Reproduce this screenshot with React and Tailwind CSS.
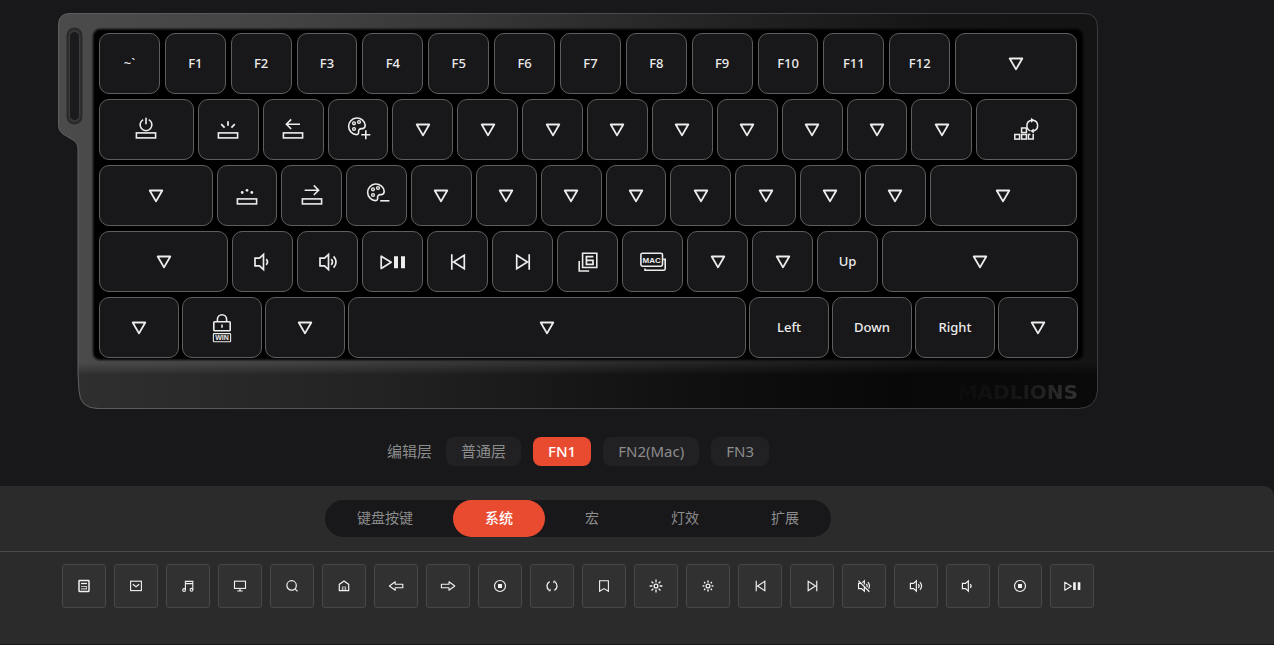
import { useState } from "react";

const UI_FONT = "font-['Noto_Sans','Noto_Sans_CJK_SC',sans-serif]";

function Icon({ w, h, className = "", children }) {
  return (
    <svg
      width={w}
      height={h}
      viewBox={`0 0 ${w} ${h}`}
      fill="none"
      stroke="currentColor"
      strokeWidth="1.6"
      aria-hidden="true"
      className={`shrink-0 ${className}`}
    >
      {children}
    </svg>
  );
}

/* ---------- key cap icons ---------- */

const Transparent = () => (
  <Icon w={16} h={14}>
    <path d="M1.7 1.5h12.6L8 12.4z" strokeWidth="1.8" strokeLinejoin="round" />
  </Icon>
);

const Bar = () => <rect x="1.4" y="15.9" width="19.2" height="5" strokeWidth="1.6" />;

const LightPower = () => (
  <Icon w={22} h={26}>
    <Bar />
    <path d="M8.2 2.6a5.9 5.9 0 1 0 5.6 0M11 .8v6.4" />
  </Icon>
);

const LightUp = () => (
  <Icon w={22} h={26}>
    <Bar />
    <path d="M11 4.3v4.4M4.2 7.2l3.4 3.4M17.8 7.2l-3.4 3.4" strokeWidth="1.8" />
  </Icon>
);

const LightDown = () => (
  <Icon w={22} h={26}>
    <Bar />
    <g fill="currentColor" stroke="none">
      <circle cx="11" cy="7.3" r="1.4" />
      <circle cx="6.2" cy="9.5" r="1.4" />
      <circle cx="15.8" cy="9.5" r="1.4" />
    </g>
  </Icon>
);

const SpeedDown = () => (
  <Icon w={22} h={26}>
    <Bar />
    <path d="M18 7.2H4.6M9.2 2.4L4.4 7.2l4.8 4.8" />
  </Icon>
);

const SpeedUp = () => (
  <Icon w={22} h={26}>
    <Bar />
    <path d="M3.6 7.2H17M12.8 2.4l4.8 4.8-4.8 4.8" />
  </Icon>
);

const PaletteShape = () => (
  <>
    <path d="M12.7 17.6A8.3 8.3 0 1 1 21.2 8.4Q21 11.4 18.6 11.6H17.6Q14.4 11.8 14.6 14.6Q14.8 17.6 12.7 17.6Z" />
    <circle cx="10" cy="6.3" r="1.4" strokeWidth="1.4" />
    <circle cx="15" cy="5" r="1.4" strokeWidth="1.4" />
    <circle cx="10" cy="12" r="1.4" strokeWidth="1.4" />
  </>
);

const PalettePlus = () => (
  <Icon w={27} h={26}>
    <PaletteShape />
    <path d="M17.3 17.8h9M21.8 13.3v9" />
  </Icon>
);

const PaletteMinus = () => (
  <Icon w={27} h={26}>
    <PaletteShape />
    <path d="M17.2 17.8h9.2" />
  </Icon>
);

const EffectSwitch = () => (
  <Icon w={26} h={26}>
    <g strokeWidth="1.5">
      <rect x=".8" y="17.5" width="4.8" height="4.6" />
      <rect x="7.6" y="17.5" width="4.8" height="4.6" />
      <rect x="7.6" y="11" width="4.8" height="4.6" />
      <path d="M16.4 17.5h-2v4.6h4.8v-5" />
      <path d="M16.4 13.9A5.6 5.6 0 0 1 17.4 3.2M19.4 3.2a5.6 5.6 0 0 1 .2 10.8" />
    </g>
    <path d="M17 .8v5l3.4-2.5zM19.8 11.4v5l-3.4-2.5z" fill="currentColor" stroke="none" />
  </Icon>
);

const Speaker = () => <path d="M2 6.2h4.5l4-3.7v15l-4-3.7H2z" />;

const VolumeDown = ({ className }) => (
  <svg viewBox="0 0 20 20" fill="none" stroke="currentColor" strokeWidth="1.7" aria-hidden="true" className={className}>
    <Speaker />
    <path d="M13.2 7.2q2.6 2.8 0 5.6" />
  </svg>
);

const VolumeUp = ({ className }) => (
  <svg viewBox="0 0 20 20" fill="none" stroke="currentColor" strokeWidth="1.7" aria-hidden="true" className={className}>
    <Speaker />
    <path d="M13.2 7.2q2.6 2.8 0 5.6M15.6 4.4q4.8 5.6 0 11.2" />
  </svg>
);

const VolumeMute = ({ className }) => (
  <svg viewBox="0 0 20 20" fill="none" stroke="currentColor" strokeWidth="1.7" aria-hidden="true" className={className}>
    <path d="M5.4 6.2H2.2v7.6h4.3l4 3.7V11M7.6 5.2l2.9-2.7v5.2M13.2 7.2q2 2 .9 4.2M15.6 4.4q3.8 4.6 1 9.4M2 2.4l15.6 15.8" />
  </svg>
);

const PlayPause = ({ className }) => (
  <svg viewBox="0 0 26 20" fill="none" stroke="currentColor" strokeWidth="1.7" aria-hidden="true" className={className}>
    <path d="M1.2 4.2v12.2l10-6.1z" strokeLinejoin="round" />
    <path d="M14 4.2h4v12h-4zM21 4.2h4v12h-4z" fill="currentColor" stroke="none" />
  </svg>
);

const Previous = ({ className }) => (
  <svg viewBox="0 0 16 20" fill="none" stroke="currentColor" strokeWidth="1.7" aria-hidden="true" className={className}>
    <path d="M1.8 2.2v15.6M14.3 3.2v13.6L3.6 10z" />
  </svg>
);

const Next = ({ className }) => (
  <svg viewBox="0 0 16 20" fill="none" stroke="currentColor" strokeWidth="1.7" aria-hidden="true" className={className}>
    <path d="M14.2 2.2v15.6M1.7 3.2v13.6L12.4 10z" />
  </svg>
);

const SixKey = () => (
  <Icon w={20} h={20}>
    <path d="M4.6 1.2h14.2v14.3H4.6zM1.2 9v10h10" />
    <path d="M15.4 4.6H8.4v7.8h6.6V8.4H8.4" strokeWidth="1.7" />
  </Icon>
);

const MacKey = () => (
  <Icon w={26} h={20}>
    <rect x=".9" y="1.2" width="21.6" height="13" rx="1.6" />
    <path d="M5 16.4v1.9h18.6q1.6 0 1.6-1.6V7.4h-2" />
    <text
      x="11.7"
      y="10.6"
      textAnchor="middle"
      fontFamily="Liberation Sans, sans-serif"
      fontWeight="700"
      fontSize="8"
      fill="currentColor"
      stroke="none"
    >
      MAC
    </text>
  </Icon>
);

const WinLock = () => (
  <Icon w={22} h={30}>
    <path d="M6.4 8.6V6.4a4.6 4.6 0 0 1 9.2 0v2.2" />
    <rect x="2.8" y="8.7" width="16.4" height="9" rx=".8" />
    <path d="M11 11.4v3.4" strokeWidth="1.5" />
    <rect x="2.4" y="20.6" width="17.2" height="8.2" rx=".6" strokeWidth="1.1" />
    <text
      x="11"
      y="27.3"
      textAnchor="middle"
      fontFamily="Liberation Sans, sans-serif"
      fontWeight="700"
      fontSize="7"
      fill="currentColor"
      stroke="none"
    >
      WIN
    </text>
  </Icon>
);

/* ---------- palette tile icons (16px grid) ---------- */

function Small({ children }) {
  return (
    <svg viewBox="0 0 16 16" fill="none" stroke="currentColor" strokeWidth="1.1" aria-hidden="true" className="size-4">
      {children}
    </svg>
  );
}

const Calculator = () => (
  <Small>
    <rect x="3" y="2.6" width="10" height="10.8" rx=".6" strokeWidth="1.5" />
    <path d="M5 5.5h6" strokeWidth="1.3" />
    <path d="M5 8.5h6M5 10.9h6M10.5 8.5v2.5" strokeOpacity=".75" />
  </Small>
);
const Mail = () => (
  <Small>
    <rect x="2.6" y="3.2" width="10.8" height="9.4" />
    <path d="M4.8 6.2L8 8.8l3.2-2.6" />
  </Small>
);
const Music = () => (
  <Small>
    <path d="M5.4 11.8V3.4h7.4v8M5.4 5.6h7.4" />
    <circle cx="4.1" cy="12" r="1.4" />
    <circle cx="11.5" cy="11.8" r="1.4" />
  </Small>
);
const Monitor = () => (
  <Small>
    <rect x="2.5" y="3.2" width="11" height="7.2" />
    <path d="M8 10.5v2.3M5.3 13h5.4" strokeWidth="1.2" />
  </Small>
);
const Search = () => (
  <Small>
    <circle cx="7.6" cy="7.4" r="4.7" strokeWidth="1.2" />
    <path d="M11 10.8l2.5 2.6" strokeWidth="1.2" />
  </Small>
);
const HomeIcon = () => (
  <Small>
    <path d="M3.3 12.7V6.4L8 3l4.7 3.4v6.3z" strokeWidth="1.2" />
    <path d="M6.4 12.5V9h3.2v3.5M8 10.4v2" strokeOpacity=".7" />
  </Small>
);
const Back = () => (
  <Small>
    <path d="M1.4 8l5.8-4.2v2.4h7.6v3.6H7.2v2.4z" strokeLinejoin="round" />
  </Small>
);
const Forward = () => (
  <Small>
    <path d="M14.8 8L9 3.8v2.4H1.4v3.6H9v2.4z" strokeLinejoin="round" />
  </Small>
);
const Stop = () => (
  <Small>
    <circle cx="8" cy="8" r="5.5" strokeWidth="1.2" />
    <path d="M6 6h4v4H6z" fill="currentColor" stroke="none" />
  </Small>
);
const Refresh = () => (
  <Small>
    <path d="M5.6 3.6A5 5 0 0 0 5.2 12.2M10.4 12.4A5 5 0 0 0 10.8 3.8" strokeWidth="1.3" />
    <path d="M6.6 10.6v2.6H4.4zM9.4 5.4V2.8h2.2z" fill="currentColor" stroke="none" />
  </Small>
);
const Bookmark = () => (
  <Small>
    <path d="M3.6 2.8h8.8v10.4L8 10.6l-4.4 2.6z" />
  </Small>
);
const BrightnessUp = () => (
  <Small>
    <circle cx="8" cy="8" r="1.9" strokeWidth="1.3" />
    <path
      d="M8 1.6v2.8M8 11.6v2.8M1.6 8h2.8M11.6 8h2.8M3.5 3.5l1.9 1.9M10.6 10.6l1.9 1.9M12.5 3.5l-1.9 1.9M5.4 10.6l-1.9 1.9"
      strokeWidth="1.3"
    />
  </Small>
);
const BrightnessDown = () => (
  <Small>
    <circle cx="8" cy="8" r="1.9" strokeWidth="1.3" />
    <path
      d="M8 2.6v1.8M8 11.6v1.8M2.6 8h1.8M11.6 8h1.8M4.1 4.1l1.2 1.2M10.7 10.7l1.2 1.2M11.9 4.1l-1.2 1.2M5.3 10.7l-1.2 1.2"
      strokeWidth="1.5"
    />
  </Small>
);

/* ---------- keyboard data ---------- */

const none = (width = "grow-59") => ({ label: "透传", icon: <Transparent />, width });
const text = (t, width = "grow-59") => ({ label: t, text: t, width });
const glyph = (label, icon, width = "grow-59") => ({ label, icon, width });

const ROWS = [
  {
    spacing: "gap-[5px] pr-px",
    keys: [
      text("~`"),
      text("F1"),
      text("F2"),
      text("F3"),
      text("F4"),
      text("F5"),
      text("F6"),
      text("F7"),
      text("F8"),
      text("F9"),
      text("F10"),
      text("F11"),
      text("F12"),
      none("grow-120"),
    ],
  },
  {
    spacing: "gap-1 pr-px",
    keys: [
      glyph("灯光开关", <LightPower />, "grow-93"),
      glyph("亮度加", <LightUp />),
      glyph("速度减", <SpeedDown />),
      glyph("颜色加", <PalettePlus />),
      none(),
      none(),
      none(),
      none(),
      none(),
      none(),
      none(),
      none(),
      none(),
      glyph("切换灯效", <EffectSwitch />, "grow-99"),
    ],
  },
  {
    spacing: "gap-1 pr-px",
    keys: [
      none("grow-112"),
      glyph("亮度减", <LightDown />),
      glyph("速度加", <SpeedUp />),
      glyph("颜色减", <PaletteMinus />),
      none(),
      none(),
      none(),
      none(),
      none(),
      none(),
      none(),
      none(),
      none("grow-146"),
    ],
  },
  {
    spacing: "gap-1",
    keys: [
      none("grow-127"),
      glyph("音量减", <VolumeDown className="size-5" />),
      glyph("音量加", <VolumeUp className="size-5" />),
      glyph("播放/暂停", <PlayPause className="h-5 w-[26px]" />),
      glyph("上一曲", <Previous className="h-5 w-4" />),
      glyph("下一曲", <Next className="h-5 w-4" />),
      glyph("六键无冲", <SixKey />),
      glyph("Mac 模式", <MacKey />),
      none(),
      none(),
      text("Up"),
      none("grow-194"),
    ],
  },
  {
    spacing: "gap-[3px]",
    keys: [
      none("grow-78"),
      glyph("锁定 Win", <WinLock />, "grow-78"),
      none("grow-78"),
      none("grow-396"),
      text("Left", "grow-78"),
      text("Down", "grow-78"),
      text("Right", "grow-78"),
      none("grow-78"),
    ],
  },
];

const LAYERS = ["普通层", "FN1", "FN2(Mac)", "FN3"];
const TABS = ["键盘按键", "系统", "宏", "灯效", "扩展"];

const TILES = [
  ["计算器", <Calculator />],
  ["邮件", <Mail />],
  ["音乐", <Music />],
  ["我的电脑", <Monitor />],
  ["搜索", <Search />],
  ["主页", <HomeIcon />],
  ["后退", <Back />],
  ["前进", <Forward />],
  ["停止", <Stop />],
  ["刷新", <Refresh />],
  ["收藏", <Bookmark />],
  ["亮度加", <BrightnessUp />],
  ["亮度减", <BrightnessDown />],
  ["上一曲", <Previous className="h-[14px] w-[11px]" />],
  ["下一曲", <Next className="h-[14px] w-[11px]" />],
  ["静音", <VolumeMute className="size-[14px]" />],
  ["音量加", <VolumeUp className="size-[14px]" />],
  ["音量减", <VolumeDown className="size-[14px]" />],
  ["停止播放", <Stop />],
  ["播放/暂停", <PlayPause className="h-[14px] w-[17px]" />],
];

function Chassis() {
  const outline =
    "M12 .5H1026Q1039.5 .5 1039.5 14V378Q1038 395.5 1020 395.5H40Q22 395.5 21 378L20 360V136Q20 130 15 127L5 121Q.5 118 .5 112V12Q.5 .5 12 .5Z";
  return (
    <svg
      viewBox="0 0 1040 396"
      preserveAspectRatio="none"
      className="absolute inset-0 h-full w-full"
      aria-hidden="true"
    >
      <defs>
        <linearGradient id="body" x1="0" x2="1">
          <stop offset="0" stopColor="#4b4b4b" />
          <stop offset=".2" stopColor="#444444" />
          <stop offset=".4" stopColor="#363636" />
          <stop offset=".65" stopColor="#222222" />
          <stop offset=".85" stopColor="#151515" />
          <stop offset="1" stopColor="#141414" />
        </linearGradient>
        <linearGradient id="lip" x1="0" x2="1">
          <stop offset="0" stopColor="#2f2f2f" />
          <stop offset=".3" stopColor="#222222" />
          <stop offset=".6" stopColor="#101010" />
          <stop offset=".8" stopColor="#080808" />
          <stop offset="1" stopColor="#0a0a0a" />
        </linearGradient>
        <linearGradient id="edge" x1="0" x2="1">
          <stop offset="0" stopColor="#5e5e5e" />
          <stop offset="1" stopColor="#3a3a3c" />
        </linearGradient>
        <linearGradient id="fade" x1="0" x2="0" y1="0" y2="1">
          <stop offset="0" stopColor="#000" />
          <stop offset="1" stopColor="#fff" />
        </linearGradient>
        <mask id="lipMask" maskUnits="userSpaceOnUse" x="0" y="340" width="1040" height="60">
          <rect x="0" y="350" width="1040" height="12" fill="url(#fade)" />
          <rect x="0" y="361" width="1040" height="40" fill="#fff" />
        </mask>
        <filter id="soft" x="-5%" y="-5%" width="110%" height="110%">
          <feGaussianBlur stdDeviation="1.2" />
        </filter>
      </defs>
      <path d={outline} fill="url(#body)" />
      <path d="M20 350H1039.5V378Q1038 395.5 1020 395.5H40Q22 395.5 21 378Z" fill="url(#lip)" mask="url(#lipMask)" />
      <path d={outline} fill="none" stroke="url(#edge)" />
      <rect x="9.5" y="15.5" width="14" height="95" rx="7" fill="#343434" stroke="#2a2a2a" strokeWidth="2" />
      <rect x="11.5" y="18.5" width="10" height="89" rx="5" fill="#1b1b1d" stroke="#3c3c3c" />
      <rect x="35" y="16" width="990" height="331" rx="7" fill="#000" filter="url(#soft)" />
    </svg>
  );
}

function Keyboard() {
  return (
    <section aria-label="键盘" className="relative w-full max-w-[1040px]">
      <Chassis />
      <div className="relative flex flex-col gap-[5px] pt-5 pr-5 pl-[41px]">
        {ROWS.map((row, r) => (
          <div key={r} className={`flex ${row.spacing}`}>
            {row.keys.map((k, i) => (
              <button
                key={i}
                type="button"
                aria-label={k.label}
                className={`flex h-[61px] min-w-0 basis-0 items-center justify-center rounded-[10px] border border-[#5e5e5e] bg-[#18181a] text-[13px] leading-5 font-medium text-[#ececec] hover:border-[#e94b31] ${
                  k.text ? "pb-0.5" : ""
                } ${k.width}`}
              >
                {k.text ?? k.icon}
              </button>
            ))}
          </div>
        ))}
      </div>
      <div className="relative flex h-[51px] items-center justify-end pt-4 pr-5">
        <span className="bg-linear-to-r from-[#0c0c0c] via-[#161616] to-[#333333] bg-clip-text font-['DejaVu_Sans',sans-serif] text-xl leading-5 font-bold text-transparent">
          MADLIONS
        </span>
      </div>
    </section>
  );
}

export default function App() {
  const [layer, setLayer] = useState("FN1");
  const [tab, setTab] = useState("系统");

  return (
    <div className={`flex min-h-screen flex-col bg-[#18181a] ${UI_FONT}`}>
      <main className="flex flex-col items-center pt-[13px] pr-[176px] pb-5 pl-[58px]">
        <Keyboard />
        <div className="mt-7 flex flex-wrap items-center gap-3 text-[15px] leading-5 text-[#8c8c8c]">
          <span className="mr-0.5 pb-0.5">编辑层</span>
          {LAYERS.map((name) => (
            <button
              key={name}
              type="button"
              aria-pressed={layer === name}
              onClick={() => setLayer(name)}
              className={`h-[29px] rounded-lg px-[15px] pb-0.5 ${
                layer === name ? "bg-[#e94b31] font-medium text-white" : "bg-[#212123]"
              }`}
            >
              {name}
            </button>
          ))}
        </div>
      </main>

      <section aria-label="按键功能" className="mb-px flex-1 rounded-tr-[10px] bg-[#2b2b2b]">
        <div className="flex justify-center border-b border-[#4a4a4a] py-[14px] pr-[118px]">
          <div role="tablist" className="flex gap-2 rounded-full bg-[#18181a]">
            {TABS.map((name) => (
              <button
                key={name}
                type="button"
                role="tab"
                aria-selected={tab === name}
                onClick={() => setTab(name)}
                className={`h-[37px] rounded-full px-8 pb-0.5 text-[14px] leading-5 ${
                  tab === name ? "bg-[#e94b31] font-medium text-white" : "text-[#8c8c8c]"
                }`}
              >
                {name}
              </button>
            ))}
          </div>
        </div>
        <div className="pt-3 pr-[180px] pb-9 pl-[62px]">
          <div className="mx-auto flex max-w-[1032px] flex-wrap gap-2">
            {TILES.map(([label, icon]) => (
              <button
                key={label}
                type="button"
                aria-label={label}
                className="flex size-11 items-center justify-center rounded-[3px] border border-[#484848] bg-[#313131] text-[#f2f2f2] hover:border-[#e94b31]"
              >
                {icon}
              </button>
            ))}
          </div>
        </div>
      </section>
    </div>
  );
}
